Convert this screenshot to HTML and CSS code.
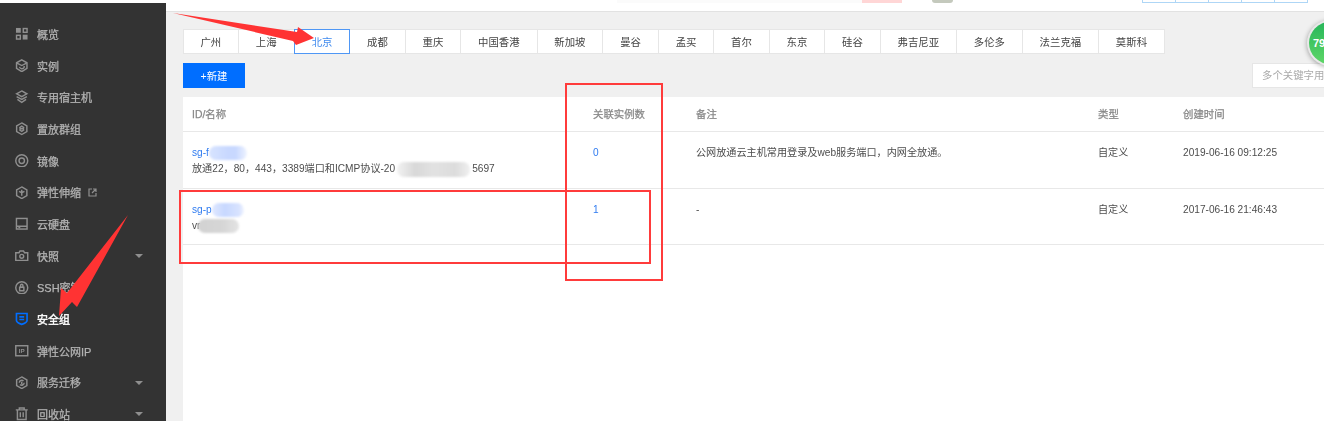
FILE: index.html
```html
<!DOCTYPE html>
<html lang="zh-CN">
<head>
<meta charset="utf-8">
<title>安全组</title>
<link rel="stylesheet" href="styles.css">
</head>
<body>
<div class="app">
  <aside class="sidebar">
    <a class="nav-item"><svg class="ico" viewBox="0 0 14 14"><rect x="1" y="1" width="5" height="5" class="solid"/><rect x="8.6" y="1.6" width="3.9" height="3.9"/><rect x="1.6" y="8.6" width="3.9" height="3.9"/><rect x="8" y="8" width="5" height="5" class="solid"/></svg><span>概览</span></a>
    <a class="nav-item"><svg class="ico" viewBox="0 0 14 14"><path d="M7 .9l5.4 3v5.9L7 13.1 1.6 9.8V3.9z"/><path d="M2 4.2l5 2.6 5-2.6M4.6 8.2a2.7 2.7 0 0 0 4.9.6M9.5 8.8V7.3"/></svg><span>实例</span></a>
    <a class="nav-item"><svg class="ico" viewBox="0 0 14 14"><path d="M7 1l5.300 3L7 7 1.700 4z"/><path d="M1.700 6.800L7 9.800l5.300-3M2.500 9.800L7 12.800l4.500-3"/></svg><span>专用宿主机</span></a>
    <a class="nav-item"><svg class="ico" viewBox="0 0 14 14"><path d="M7 1l5.300 3v6L7 13l-5.300-3V4z"/><path d="M4.500 6L7 4.300 9.500 6M4.500 8L7 9.700 9.500 8M4.500 7h5"/></svg><span>置放群组</span></a>
    <a class="nav-item"><svg class="ico" viewBox="0 0 14 14"><circle cx="7" cy="7" r="6.200"/><circle cx="7" cy="7" r="2.800"/></svg><span>镜像</span></a>
    <a class="nav-item"><svg class="ico" viewBox="0 0 14 14"><path d="M7 1l5.300 3v6L7 13l-5.300-3V4z"/><path d="M4.200 5.500L7 7l2.800-1.500M7 4v6"/></svg><span>弹性伸缩</span><svg class="ext" viewBox="0 0 9 9"><path d="M4 1H1v7h7V5M5 1h3v3M8 1L4 5"/></svg></a>
    <a class="nav-item"><svg class="ico" viewBox="0 0 14 14"><rect x="1.500" y="1.500" width="11" height="11"/><path d="M1.500 9.500h11M3.500 11h2"/></svg><span>云硬盘</span></a>
    <a class="nav-item"><svg class="ico" viewBox="0 0 14 14"><path d="M.8 3.800h3.400L5.200 2h3.600l1 1.800h3.400v8H.8z"/><circle cx="7" cy="7.600" r="2"/></svg><span>快照</span><i class="caret"></i></a>
    <a class="nav-item"><svg class="ico" viewBox="0 0 14 14"><circle cx="7" cy="7" r="6.200"/><path d="M5.800 6V4.500a1.200 1.200 0 0 1 2.400 0V6M4.800 6.500h4.400v3.600H4.800z"/></svg><span>SSH密钥</span></a>
    <a class="nav-item active"><svg class="ico" viewBox="0 0 14 14"><path d="M1.500 1.500h11v7.300c0 1.700-3.200 3.300-5.500 4-2.300-.7-5.500-2.300-5.500-4z"/><path d="M4.500 5h5M4.500 7.800h5"/></svg><span>安全组</span></a>
    <a class="nav-item"><svg class="ico" viewBox="0 0 14 14"><rect x=".8" y="1.800" width="12.400" height="10.400"/><text x="7" y="9.300" class="ip-text">IP</text></svg><span>弹性公网IP</span></a>
    <a class="nav-item"><svg class="ico" viewBox="0 0 14 14"><path d="M7 1l5.300 3v6L7 13l-5.300-3V4z"/><path d="M4.500 7a2.500 2.500 0 0 1 4.300-1.700M9.500 7a2.500 2.500 0 0 1-4.300 1.700M7 6v2.500"/></svg><span>服务迁移</span><i class="caret"></i></a>
    <a class="nav-item"><svg class="ico" viewBox="0 0 14 14"><path d="M.8 3h12.400M4.500 3V1h5v2M2.500 3v10h9V3M5.500 5.500v5M8.500 5.500v5"/></svg><span>回收站</span><i class="caret"></i></a>
  </aside>

  <div class="main">
    <header class="topbar">
      <span class="top-search"></span>
      <span class="top-alert"></span>
      <span class="top-avatar"></span>
      <span class="top-group"><i></i><i></i><i></i><i></i><i></i></span>
    </header>

    <section class="content">
      <nav class="tabs">
        <a class="tab">广州</a><a class="tab">上海</a><a class="tab selected">北京</a><a class="tab">成都</a><a class="tab">重庆</a><a class="tab">中国香港</a><a class="tab">新加坡</a><a class="tab">曼谷</a><a class="tab">孟买</a><a class="tab">首尔</a><a class="tab">东京</a><a class="tab">硅谷</a><a class="tab">弗吉尼亚</a><a class="tab">多伦多</a><a class="tab">法兰克福</a><a class="tab">莫斯科</a>
      </nav>

      <div class="toolbar">
        <button class="btn-new">+新建</button>
        <div class="search">多个关键字用竖线“|”分隔</div>
      </div>

      <div class="panel">
        <table class="grid">
          <colgroup><col class="c-id"><col class="c-num"><col class="c-note"><col class="c-type"><col class="c-time"></colgroup>
          <thead>
            <tr><th>ID/名称</th><th>关联实例数</th><th>备注</th><th>类型</th><th>创建时间</th></tr>
          </thead>
          <tbody>
            <tr>
              <td><a class="link">sg-f<span class="smudge smudge-a"></span></a><br>放通22，80，443，3389端口和ICMP协议-20<span class="smudge smudge-b"></span>5697</td>
              <td><a class="link">0</a></td>
              <td>公网放通云主机常用登录及web服务端口，内网全放通。</td>
              <td>自定义</td>
              <td>2019-06-16 09:12:25</td>
            </tr>
            <tr>
              <td><a class="link">sg-p<span class="smudge smudge-c"></span></a><br>vr<span class="smudge smudge-d"></span></td>
              <td><a class="link">1</a></td>
              <td>-</td>
              <td>自定义</td>
              <td>2017-06-16 21:46:43</td>
            </tr>
          </tbody>
        </table>
      </div>
    </section>
  </div>
</div>

<div class="score"><span>79</span></div>

<div class="mark mark-col"></div>
<div class="mark mark-row"></div>

<svg class="arrows" viewBox="0 0 1324 421">
  <polygon points="173,13 297,32 298,27 314,38 296,45 293,41"/>
  <polygon points="128,215 77,307 72,302 59,316 61,288 67,293"/>
</svg>
</body>
</html>
```
FILE: styles.css
```css
* { box-sizing: border-box; }
html, body { margin: 0; height: 100%; overflow: hidden; background: #fff; }
body {
  position: relative;
  font-family: "Liberation Sans", "Noto Sans CJK SC", sans-serif;
  font-size: 10.4px;
  color: #4d4d4d;
}
.app { display: flex; height: 421px; filter: blur(.3px); }

/* sidebar */
.sidebar {
  flex: 0 0 166px;
  margin-top: 3px;
  padding-top: 15px;
  background: #333;
  overflow: hidden;
}
.nav-item {
  display: flex;
  align-items: center;
  height: 31.7px;
  padding-left: 15px;
  font-size: 11px;
  color: #b4b4b4;
  -webkit-text-stroke: .25px #b4b4b4;
  position: relative;
}
.nav-item span { margin-left: 8.500px; }
.ico { width: 13.500px; height: 13.500px; flex: none; fill: none; stroke: #8f8f8f; stroke-width: 1.500; }
.ico .solid { fill: #8f8f8f; stroke: none; }
.ip-text { fill: #8f8f8f; stroke: none; font-size: 6.500px; font-weight: 700; text-anchor: middle; font-family: "Liberation Sans", sans-serif; }
.ext { width: 9px; height: 9px; margin-left: 7px; fill: none; stroke: #8f8f8f; stroke-width: 1.200; }
.caret {
  position: absolute;
  left: 135px;
  top: 14px;
  border-style: solid;
  border-width: 4px 4px 0;
  border-color: #8f8f8f transparent transparent;
}
.nav-item.active { color: #fff; -webkit-text-stroke: .4px #fff; }
.nav-item.active .ico { stroke: #006eff; stroke-width: 1.700; }

/* main */
.main { flex: 1; min-width: 0; display: flex; flex-direction: column; background: #f0f0f0; }
.topbar {
  flex: 0 0 12px;
  display: flex;
  align-items: flex-start;
  background: #fff;
  border-bottom: 1px solid #e2e2e2;
  padding-left: 451px;
}
.top-search { width: 245px; height: 3px; background: #fbfbfb; }
.top-alert { width: 40px; height: 3px; background: #ffd6d6; }
.top-avatar { width: 21px; height: 3px; margin-left: 30px; background: #c4c9bd; border-radius: 0 0 10px 10px; }
.top-group { display: flex; margin-left: 190px; }
.top-group i { width: 34px; height: 3px; border: 1px solid #aed6f6; border-top: 0; margin-left: -1px; }

.content { flex: 1; min-height: 0; padding: 17px 0 0 17px; display: flex; flex-direction: column; }
.tabs { display: flex; height: 25px; }
.tab {
  flex: none;
  display: flex;
  align-items: center;
  padding: 0 17px 0 16.700px;
  background: #fff;
  border: 1px solid #e6e6e6;
  border-left-width: 0;
  color: #444;
}
.tab:first-child { border-left-width: 1px; padding-left: 16.400px; }
.tab.selected { position: relative; border: 1px solid #4f97f5; color: #3f8aee; margin-left: -1px; padding: 0 17px; }

.toolbar { display: flex; justify-content: space-between; margin-top: 9px; height: 25px; }
.btn-new {
  width: 62px;
  border: 0;
  padding: 0;
  background: #006eff;
  color: #fff;
  font: inherit;
}
.search {
  width: 72px;
  padding-left: 9px;
  line-height: 23px;
  background: #fff;
  border: 1px solid #e6e6e6;
  border-right: 0;
  color: #aaa;
  white-space: nowrap;
  overflow: hidden;
}

.panel { flex: 1; min-height: 0; margin-top: 9px; background: #fff; }
.grid { width: 100%; table-layout: fixed; border-collapse: collapse; }
.c-id { width: 401px; }
.c-num { width: 103px; }
.c-note { width: 402px; }
.c-type { width: 85px; }
.grid th {
  height: 34.500px;
  padding: 0 0 2px 9px;
  text-align: left;
  font-weight: 400;
  color: #888;
  -webkit-text-stroke: .25px #888;
  border-bottom: 1.500px solid #e8e8e8;
}
.grid td {
  height: 56.500px;
  padding: 13px 0 0 9px;
  vertical-align: top;
  font-size: 10.150px;
  line-height: 16px;
  border-bottom: 1.500px solid #e8e8e8;
  white-space: nowrap;
}
.link { color: #2f7bf0; }

/* redaction smudges */
.smudge { display: inline-block; height: 14px; vertical-align: middle; border-radius: 7px; filter: blur(1px); }
.smudge-a { width: 38px; background: linear-gradient(90deg, #d8e4ff, #c8d8ff 50%, #c8d8ff 70%, #eef3ff); }
.smudge-b { width: 73px; height: 15px; margin: 0 2px; background: linear-gradient(90deg, #f2f2f2, #d8d8d8 25%, #e2e2e2 50%, #dcdcdc 80%, #f0f0f0); }
.smudge-c { width: 32px; background: linear-gradient(90deg, #dfe8ff, #c8d8ff 40%, #d8e3ff 85%, #f0f4ff); }
.smudge-d { width: 41px; margin-left: -2px; background: linear-gradient(90deg, #d2d2d2, #d6d6d6 60%, #e4e4e4); }

/* floating score badge */
.score {
  position: absolute;
  left: 1307px;
  top: 20px;
  width: 46px;
  height: 46px;
  padding: 2px;
  border-radius: 50%;
  background: #e8e8e8;
  box-shadow: 0 1px 5px rgba(0, 0, 0, .35);
}
.score span {
  display: block;
  height: 100%;
  padding-left: 4px;
  border-radius: 50%;
  line-height: 42px;
  background: linear-gradient(#27b65a, #5ed667);
  color: #fff;
  font-size: 11px;
  font-weight: 700;
}

/* annotations */
.mark { position: absolute; border: 2.500px solid #ff3b3b; }
.mark-col { left: 565px; top: 83px; width: 98px; height: 198px; }
.mark-row { left: 179px; top: 190px; width: 472px; height: 74px; }
.arrows { position: absolute; left: 0; top: 0; width: 1324px; height: 421px; fill: #ff3333; }
```
